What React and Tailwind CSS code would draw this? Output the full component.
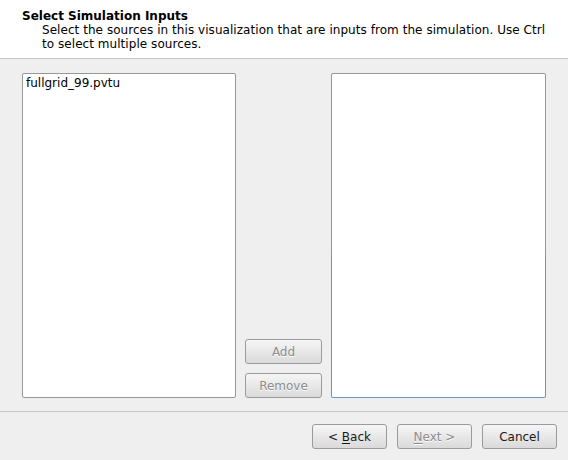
import React from "react";

const font = { fontFamily: '"DejaVu Sans", "Liberation Sans", sans-serif' };

const Button = ({ children, disabled, className = "" }) => (
  <button
    disabled={disabled}
    className={`h-[25px] rounded-[3px] border border-[#9b9b9b] bg-gradient-to-b from-[#f6f6f6] to-[#dadada] text-[12px] leading-none ${
      disabled ? "text-[#8c8c8c] [text-shadow:0_1px_0_#ffffff]" : "text-[#1a1a1a]"
    } ${className}`}
  >
    {children}
  </button>
);

const App = () => {
  return (
    <div
      className="w-[568px] h-[460px] bg-[#efefef] flex flex-col text-[12px] text-black"
      style={font}
    >
      {/* Header */}
      <div className="h-[59px] bg-white border-b border-[#c6c6c6] pl-[22px] pt-[9px] leading-[14px]">
        <div className="font-bold">Select Simulation Inputs</div>
        <div className="pl-[20px] tracking-[0.05px]">
          Select the sources in this visualization that are inputs from the simulation. Use Ctrl
          <br />
          to select multiple sources.
        </div>
      </div>

      {/* Lists */}
      <div className="flex pl-[22px] pt-[14px]">
        <div className="w-[214px] h-[325px] bg-white border border-[#979797] rounded-[2px] px-[3px] pt-[1px] leading-[16px]">
          fullgrid_99.pvtu
        </div>
        <div className="w-[77px] ml-[9px] flex flex-col justify-end gap-[9px]">
          <Button disabled className="w-[77px]">Add</Button>
          <Button disabled className="w-[77px]">Remove</Button>
        </div>
        <div className="ml-[9px] w-[215px] h-[325px] rounded-[2px] p-[1px] bg-[linear-gradient(to_bottom,#979797_0%,#979797_56%,#6d93bb_56%,#6d93bb_100%)]">
          <div className="w-full h-full bg-white rounded-[1px]" />
        </div>
      </div>

      {/* Footer */}
      <div className="mt-[13px] border-t border-[#c6c6c6] flex justify-end gap-[10px] pr-[11px] pt-[12px]">
        <Button className="w-[75px]">
          &lt; <span className="underline underline-offset-2">B</span>ack
        </Button>
        <Button disabled className="w-[75px]">
          <span className="underline underline-offset-2">N</span>ext &gt;
        </Button>
        <Button className="w-[75px]">Cancel</Button>
      </div>
    </div>
  );
};

export default App;
